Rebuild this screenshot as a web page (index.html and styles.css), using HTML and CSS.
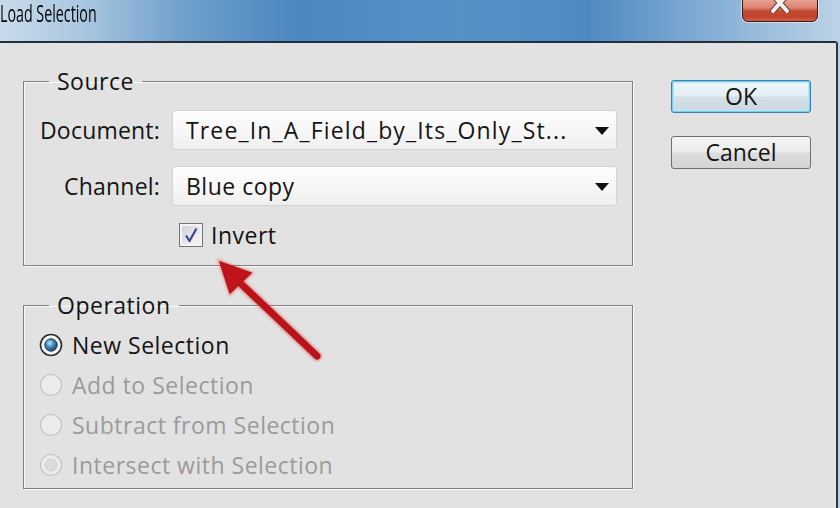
FILE: index.html
```html
<!DOCTYPE html>
<html>
<head>
<meta charset="utf-8">
<title>Load Selection</title>
<link rel="stylesheet" href="styles.css">
</head>
<body>
<div class="window">
  <div class="titlebar">
    <span class="title">Load Selection</span>
    <div class="close">
      <svg width="24" height="14" viewBox="0 0 24 14"><path d="M5 -4 L19 12 M19 -4 L5 12" stroke="#6a3a34" stroke-width="6" stroke-linecap="round"/><path d="M5 -4 L19 12 M19 -4 L5 12" stroke="#f4f0ee" stroke-width="4" stroke-linecap="round"/></svg>
    </div>
  </div>
  <div class="dialog">
    <div class="main">
      <fieldset class="group source">
        <legend>Source</legend>
        <div class="fields">
          <label class="lbl">Document:</label>
          <div class="select"><span class="val doc">Tree_In_A_Field_by_Its_Only_St...</span><svg class="caret" width="14" height="8" viewBox="0 0 14 8"><path d="M0 0 H14 L7 8 Z" fill="#111"/></svg></div>
          <label class="lbl">Channel:</label>
          <div class="select"><span class="val">Blue copy</span><svg class="caret" width="14" height="8" viewBox="0 0 14 8"><path d="M0 0 H14 L7 8 Z" fill="#111"/></svg></div>
        </div>
        <div class="checkrow">
          <span class="checkbox"><svg width="16" height="16" viewBox="0 0 16 16"><path d="M3 8.5 L6.5 14 L13.5 1.5" fill="none" stroke="#3b4790" stroke-width="2.2" stroke-linejoin="round"/></svg></span>
          <span>Invert</span>
        </div>
      </fieldset>
      <fieldset class="group operation">
        <legend>Operation</legend>
        <div class="radios">
          <div class="radio">
            <svg class="dot" width="24" height="24" viewBox="0 0 24 24">
              <defs><radialGradient id="rg" cx="0.4" cy="0.35" r="0.7"><stop offset="0" stop-color="#bfe9fb"/><stop offset="0.45" stop-color="#3d8fbe"/><stop offset="1" stop-color="#123f5e"/></radialGradient></defs>
              <circle cx="12" cy="12" r="10.5" fill="#f7f7f7" stroke="#2e2e2e" stroke-width="1.6"/>
              <circle cx="12" cy="12" r="6.2" fill="url(#rg)" stroke="#1d3a50" stroke-width="1"/>
            </svg>
            <span>New Selection</span>
          </div>
          <div class="radio disabled">
            <svg class="dot" width="24" height="24" viewBox="0 0 24 24"><circle cx="12" cy="12" r="10.5" fill="#ececec" stroke="#c4c4c4" stroke-width="1.2"/></svg>
            <span>Add to Selection</span>
          </div>
          <div class="radio disabled">
            <svg class="dot" width="24" height="24" viewBox="0 0 24 24"><circle cx="12" cy="12" r="10.5" fill="#ececec" stroke="#c4c4c4" stroke-width="1.2"/></svg>
            <span>Subtract from Selection</span>
          </div>
          <div class="radio disabled">
            <svg class="dot" width="24" height="24" viewBox="0 0 24 24"><circle cx="12" cy="12" r="10.5" fill="#ececec" stroke="#c4c4c4" stroke-width="1.2"/><circle cx="12" cy="12" r="6" fill="#dcdcdc" stroke="#cfcfcf" stroke-width="1"/></svg>
            <span>Intersect with Selection</span>
          </div>
        </div>
      </fieldset>
    </div>
    <div class="buttons">
      <button class="btn default">OK</button>
      <button class="btn">Cancel</button>
    </div>
  </div>
  <svg class="arrow" width="840" height="508" viewBox="0 0 840 508">
    <defs><filter id="glow" x="-20%" y="-20%" width="140%" height="140%"><feGaussianBlur stdDeviation="1.2"/></filter></defs>
    <g filter="url(#glow)" opacity="0.5">
      <line x1="238" y1="281" x2="317" y2="356" stroke="#e05050" stroke-width="10" stroke-linecap="round"/>
      <polygon points="219,261 252,273 230,294" fill="#e05050" stroke="#e05050" stroke-width="3"/>
    </g>
    <line x1="238" y1="281" x2="317" y2="356" stroke="#b8141c" stroke-width="7" stroke-linecap="round"/>
    <polygon points="220,262 251,273 230,293" fill="#c0141c" stroke="#b8141c" stroke-width="1.5" stroke-linejoin="round"/>
  </svg>
</div>
</body>
</html>
```

FILE: styles.css
```css
* { box-sizing: border-box; }
html, body { margin: 0; padding: 0; }
body {
  width: 840px;
  height: 508px;
  overflow: hidden;
  font-family: "Open Sans", "Noto Sans", sans-serif;
  color: #141414;
  background: #b9d0e6;
}
.window {
  position: relative;
  width: 840px;
  height: 508px;
}
.titlebar {
  height: 41px;
  display: flex;
  justify-content: space-between;
  align-items: flex-start;
  background: linear-gradient(90deg, #c9dbeb 0%, #a9c6e0 10%, #6f9fcb 22%, #4d88c1 35%, #5590c7 55%, #4f8ac2 70%, #86b0d6 85%, #bcd2e6 100%);
}
.title {
  display: inline-block;
  font-size: 23px;
  line-height: 28px;
  margin-top: -1px;
  color: #050505;
  transform: scaleX(0.62);
  transform-origin: 0 0;
  white-space: nowrap;
}
.close {
  width: 76px;
  height: 24px;
  margin-top: -2px;
  margin-right: 22px;
  border: 1px solid #3d1a15;
  border-radius: 0 0 6px 6px;
  background: linear-gradient(180deg, #e7a596 0%, #dc8270 40%, #c44a33 55%, #c2432c 80%, #d06048 100%);
  box-shadow: 0 0 0 1px rgba(255,255,255,0.5);
  display: flex;
  justify-content: center;
  align-items: flex-start;
}
.dialog {
  width: 838px;
  height: 467px;
  background: #e2e2e2;
  border-top: 2px solid #22303e;
  border-right: 2px solid #2b3440;
  border-top-right-radius: 3px;
  display: flex;
  align-items: flex-start;
  padding-left: 23px;
  letter-spacing: 0.5px;
}
.main {
  width: 610px;
  display: flex;
  flex-direction: column;
}
.group {
  width: 610px;
  min-width: 0;
  margin: 0;
  border: 1px solid #7f7f7f;
  box-shadow: 1px 1px 0 #fafafa, inset 1px 1px 0 #fafafa;
  padding: 0;
}
.group legend {
  font-size: 23px;
  line-height: 28px;
  margin-left: 25px;
  padding: 0 8px;
}
.source {
  margin-top: 24px;
  padding: 15px 14px 12px 0;
}
.fields {
  display: grid;
  grid-template-columns: 136px 445px;
  column-gap: 12px;
  row-gap: 16px;
  align-items: center;
}
.lbl {
  font-size: 23px;
  text-align: right;
  letter-spacing: 0.2px;
}
.select {
  height: 40px;
  border: 1px solid #d2d2d2;
  border-radius: 3px;
  background: linear-gradient(180deg, #fdfdfd 0%, #f6f6f6 60%, #efefef 100%);
  display: flex;
  align-items: center;
  justify-content: space-between;
  padding: 0 7px 0 13px;
  font-size: 23px;
}
.val { white-space: nowrap; }
.val.doc { letter-spacing: 1.15px; }
.caret { margin-top: 2px; }
.checkrow {
  display: flex;
  align-items: center;
  gap: 8px;
  margin-top: 11px;
  padding-left: 155px;
  font-size: 23px;
  height: 36px;
}
.checkbox {
  width: 24px;
  height: 24px;
  border: 1px solid #737373;
  background: #f4f4f4;
  display: flex;
  align-items: center;
  justify-content: center;
}
.checkbox svg {
  background: linear-gradient(135deg, #cfcfd6 0%, #e9e9ee 60%, #f5f5f8 100%);
  width: 18px;
  height: 18px;
  padding: 1px;
}
.operation {
  margin-top: 25px;
  padding: 6px 0 3px 0;
}
.radios {
  padding-left: 15px;
}
.radio {
  height: 40px;
  display: flex;
  align-items: center;
  gap: 9px;
  font-size: 23px;
}
.radio.disabled { color: #9b9b9b; }
.buttons {
  margin-left: 38px;
  margin-top: 37px;
  display: flex;
  flex-direction: column;
  gap: 23px;
}
.btn {
  width: 140px;
  height: 33px;
  border: 1px solid #6f6f6f;
  border-radius: 3px;
  background: linear-gradient(180deg, #f4f4f4 0%, #ececec 48%, #dedede 52%, #d4d4d4 100%);
  font-family: "Open Sans", "Noto Sans", sans-serif;
  font-size: 23px;
  line-height: 29px;
  color: #141414;
  padding: 0;
}
.btn.default {
  border-color: #3d7fae;
  box-shadow: inset 0 0 0 1px #72d0f2, inset 0 0 0 2px #b6e6f7;
  background: linear-gradient(180deg, #eef6fa 0%, #e4eef3 48%, #d3e0e7 52%, #cbd8df 100%);
}
.arrow {
  position: absolute;
  left: 0;
  top: 0;
  pointer-events: none;
}
```
